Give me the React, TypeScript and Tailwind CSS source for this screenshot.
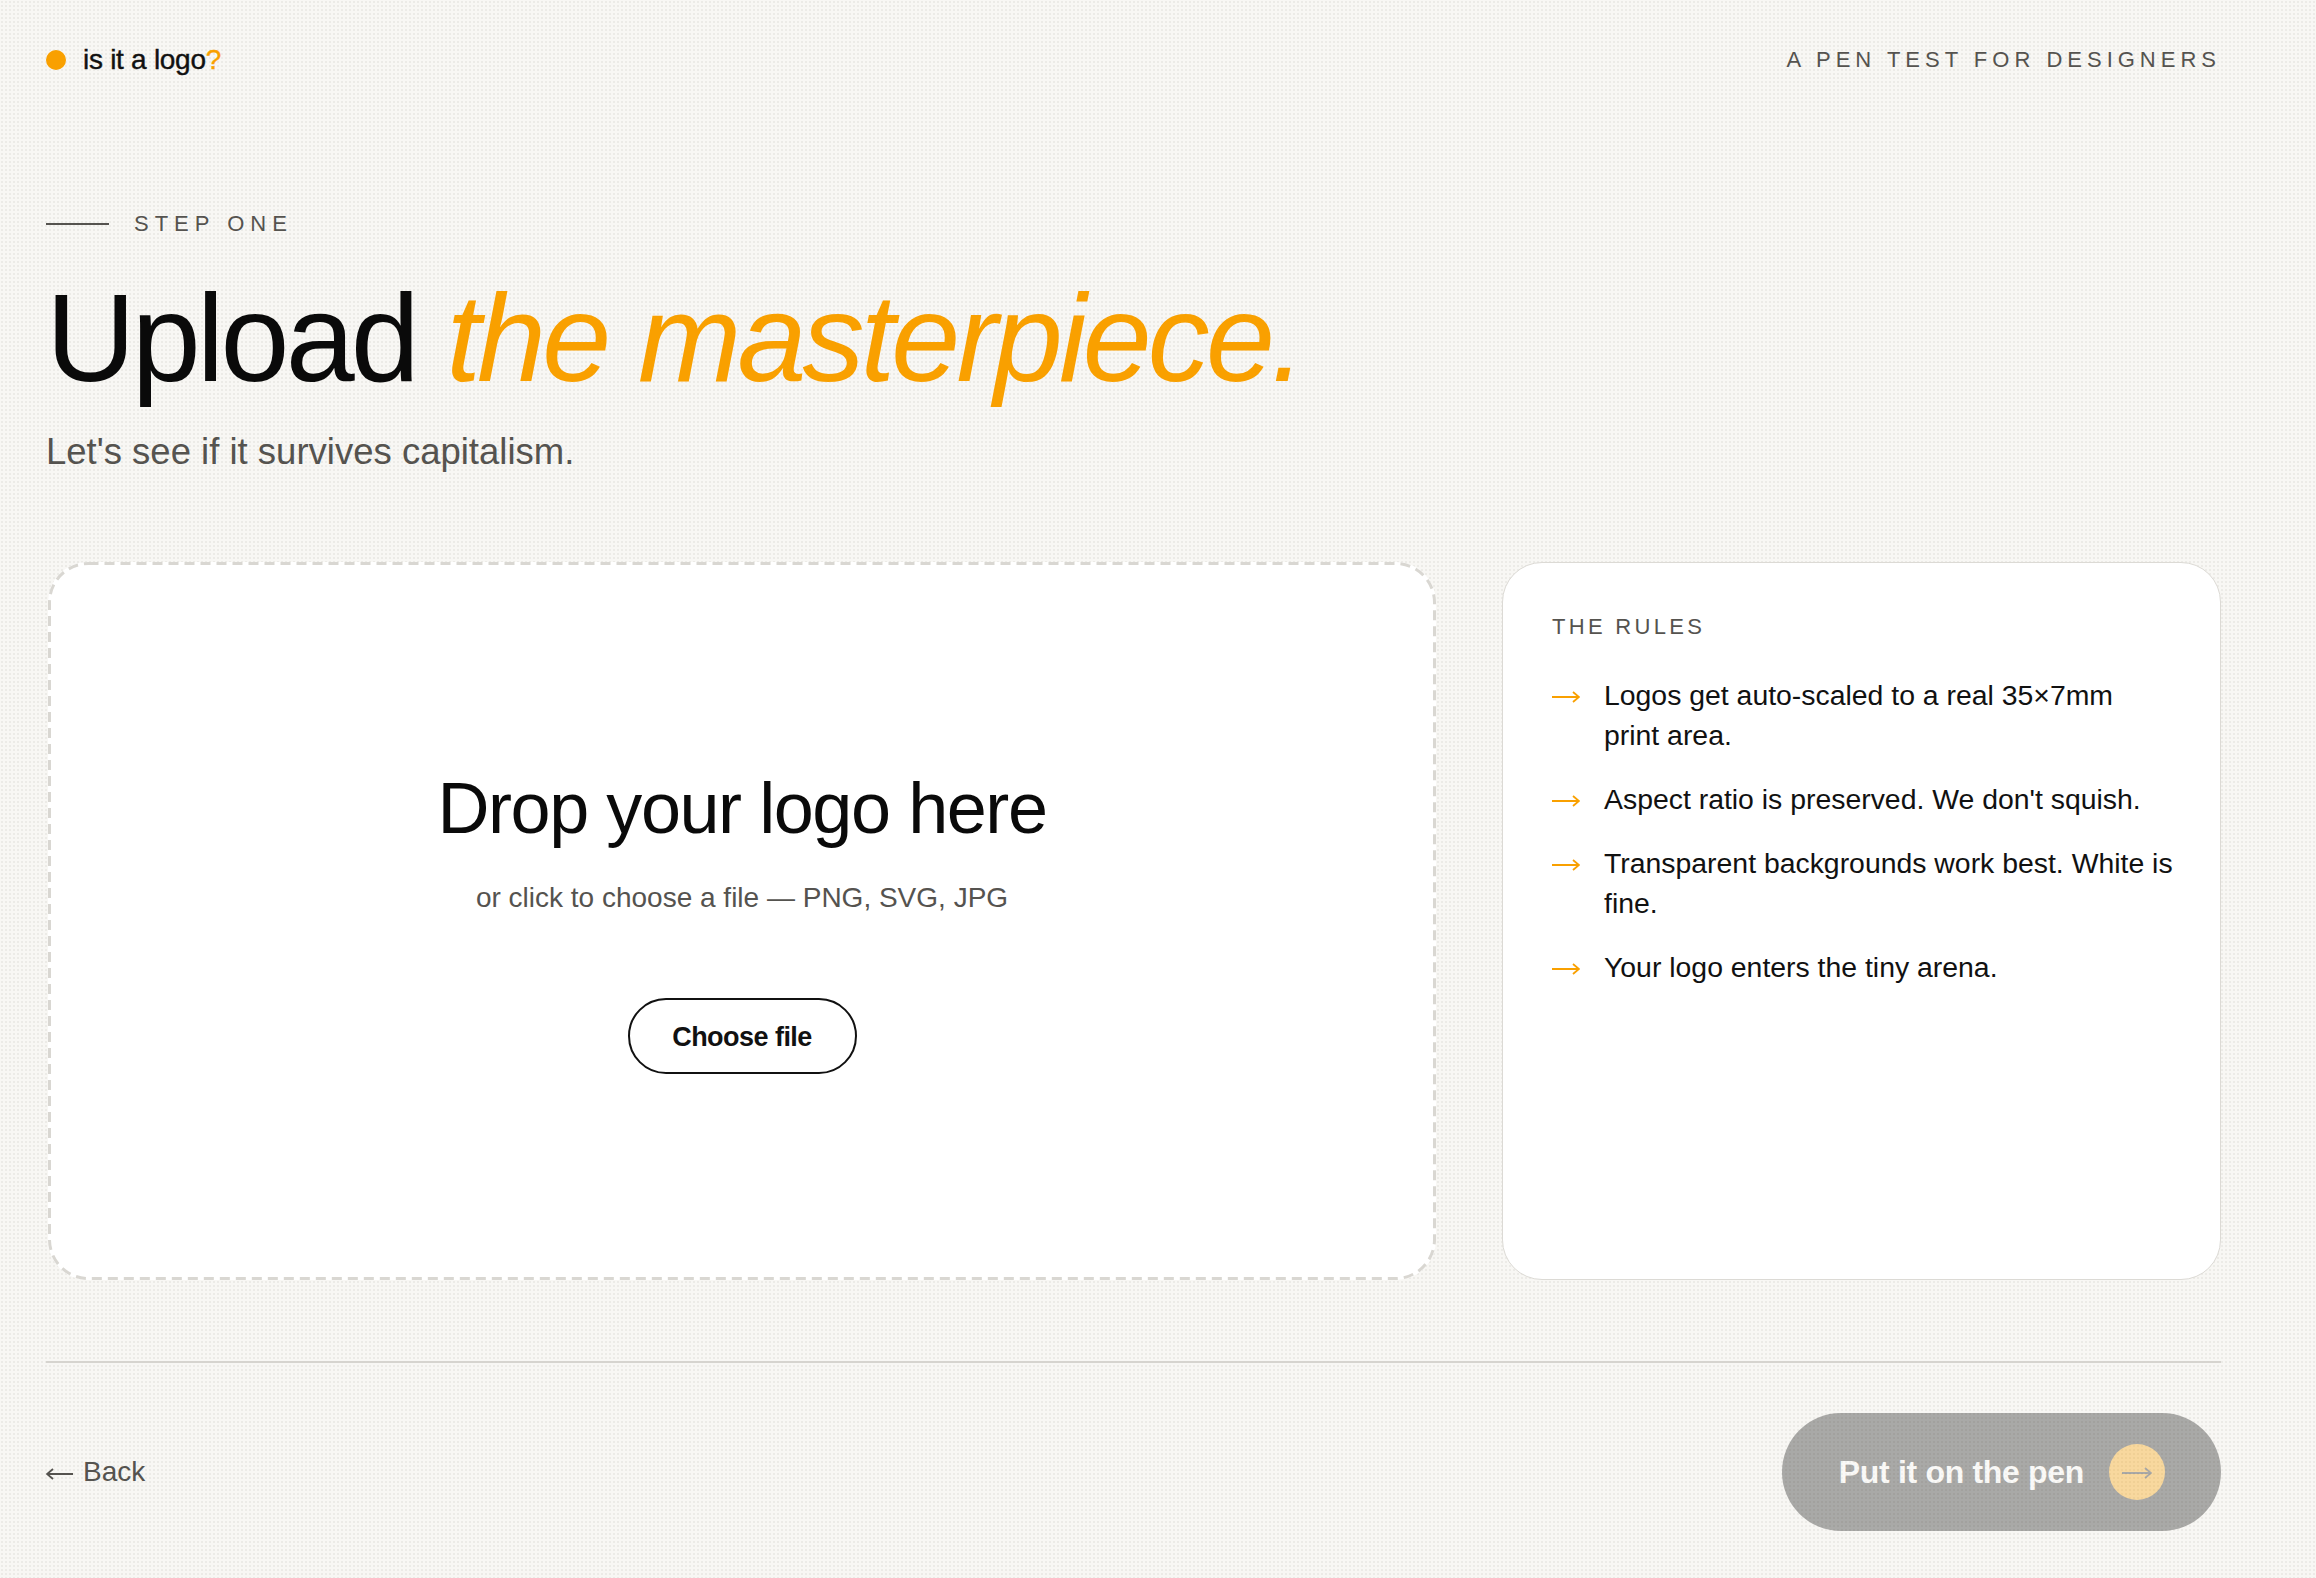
import React from "react";

const rules = [
  "Logos get auto-scaled to a real 35×7mm print area.",
  "Aspect ratio is preserved. We don't squish.",
  "Transparent backgrounds work best. White is fine.",
  "Your logo enters the tiny arena.",
];

function ArrowRight({ className, w = 28, h = 14 }: { className?: string; w?: number; h?: number }) {
  return (
    <svg width={w} height={h} viewBox={`0 0 ${w} ${h}`} fill="none" className={className}>
      <path
        d={`M0 ${h / 2} H${w - 1} M${w - 7} ${h / 2 - 5} L${w - 1} ${h / 2} L${w - 7} ${h / 2 + 5}`}
        stroke="currentColor"
        strokeWidth="1.8"
        strokeLinecap="butt"
        strokeLinejoin="miter"
      />
    </svg>
  );
}

function ArrowLeft({ className }: { className?: string }) {
  return (
    <svg width={27} height={14} viewBox="0 0 27 14" fill="none" className={className}>
      <path d="M27 7 H1 M7 2 L1 7 L7 12" stroke="currentColor" strokeWidth="1.8" />
    </svg>
  );
}

export default function App() {
  return (
    <div className="min-h-screen w-full bg-[#f8f7f4] bg-[radial-gradient(circle,#ecebe7_0.9px,transparent_1.3px)] bg-[length:4px_4px] font-['Liberation_Sans',Arial,sans-serif] text-[#111]">
      <div className="pl-[46px] pr-[95px]">
        {/* Header */}
        <header className="flex h-[120px] items-center justify-between">
          <div className="flex items-center gap-[17px] pl-[0px]">
            <span className="h-[20px] w-[20px] rounded-full bg-[#f9a000]" />
            <span className="text-[28px] leading-none tracking-[-0.01em] text-[#111] [-webkit-text-stroke:0.4px_#111]">
              is it a logo<span className="text-[#f9a000] [-webkit-text-stroke:0.4px_#f9a000]">?</span>
            </span>
          </div>
          <div className="text-[22px] leading-none tracking-[5px] text-[#55534f]">
            A PEN TEST FOR DESIGNERS
          </div>
        </header>

        {/* Step label */}
        <div className="mt-[91px] flex h-[26px] items-center gap-[25px]">
          <span className="h-[2px] w-[63px] bg-[#55534f]" />
          <span className="text-[22px] leading-[26px] tracking-[6px] text-[#55534f]">STEP ONE</span>
        </div>

        {/* Heading */}
        <h1 className="mt-[39px] text-[124px] leading-[124px] tracking-[-0.031em] text-[#0a0a0a]">
          Upload <span className="italic text-[#f9a000]">the masterpiece.</span>
        </h1>

        <p className="mt-[28px] text-[36.5px] leading-[47px] tracking-[0em] text-[#55534f]">
          Let's see if it survives capitalism.
        </p>

        {/* Main grid */}
        <div className="mt-[87px] grid h-[718px] grid-cols-[1fr_719px] gap-[66px]">
          <div className="relative ml-[2px] flex flex-col items-center justify-center rounded-[40px] bg-white">
            <svg className="pointer-events-none absolute inset-0 h-full w-full" fill="none">
              <rect
                x="1.5"
                y="1.5"
                width="calc(100% - 3px)"
                height="calc(100% - 3px)"
                rx="39"
                ry="39"
                stroke="#d9d7d2"
                strokeWidth="3"
                strokeDasharray="10 6"
              />
            </svg>
            <div className="text-[72px] leading-[79px] tracking-[-0.02em] text-[#0a0a0a]">
              Drop your logo here
            </div>
            <div className="mt-[30px] text-[28px] leading-[40px] text-[#55534f]">
              or click to choose a file — PNG, SVG, JPG
            </div>
            <button className="mt-[80px] flex h-[76px] w-[229px] items-center justify-center rounded-full border-2 border-[#111] bg-white pt-[3px] text-[27px] font-bold tracking-[-0.02em] text-[#111]">
              Choose file
            </button>
          </div>

          <div className="rounded-[40px] border-[1.5px] border-[#dcdad5] bg-white pl-[49px] pt-[51px]">
            <div className="text-[22px] leading-[26px] tracking-[3.3px] text-[#55534f]">THE RULES</div>
            <ul className="mt-[35px] flex flex-col gap-[24px]">
              {rules.map((r) => (
                <li key={r} className="flex text-[28.4px] leading-[40px] tracking-[0em] text-[#111]">
                  <span className="flex h-[40px] w-[52px] shrink-0 items-center pt-[3px] text-[#f9a000]">
                    <ArrowRight />
                  </span>
                  <span className="w-[570px]">{r}</span>
                </li>
              ))}
            </ul>
          </div>
        </div>

        {/* Divider */}
        <div className="mt-[81px] h-[2px] w-full bg-[#d6d4cf]" />

        {/* Footer */}
        <footer className="flex items-center justify-between pb-[49px] pt-[50px]">
          <button className="flex items-center gap-[10px] text-[28px] leading-none text-[#55534f]">
            <ArrowLeft className="mt-[4px]" />
            <span>Back</span>
          </button>
          <button className="flex h-[118px] items-center gap-[25px] rounded-full bg-[#1a1a1a] pl-[57px] pr-[56px] opacity-[0.35]">
            <span className="text-[32px] font-bold tracking-[-0.01em] text-white">Put it on the pen</span>
            <span className="flex h-[56px] w-[56px] items-center justify-center rounded-full bg-[#f9a000] text-[#1a1a1a]">
              <ArrowRight w={30} h={12} className="mt-[2px]" />
            </span>
          </button>
        </footer>
      </div>
    </div>
  );
}
